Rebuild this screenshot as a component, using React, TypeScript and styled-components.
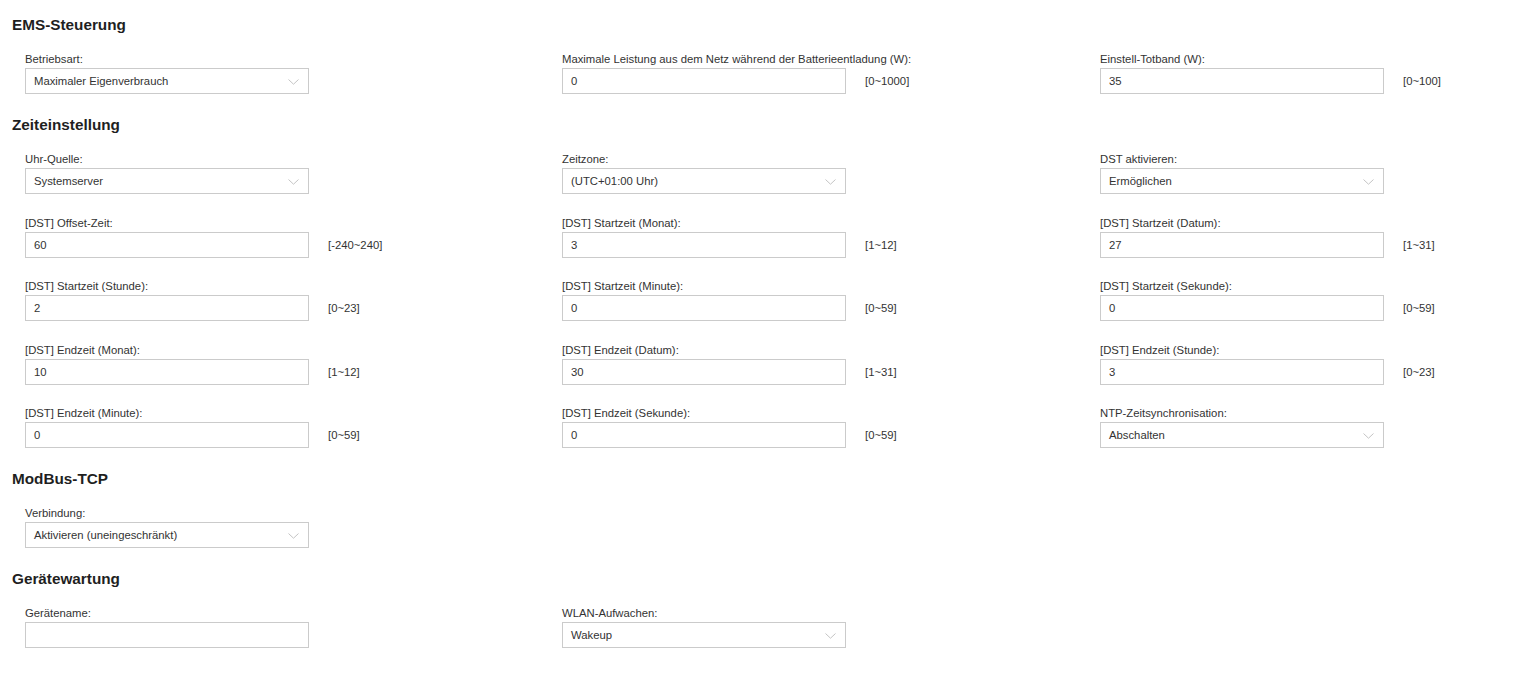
import React from "react";
import styled, { createGlobalStyle } from "styled-components";

const Global = createGlobalStyle`
  html, body { margin: 0; padding: 0; background: #fff; }
  body { font-family: Arial, "Liberation Sans", sans-serif; color: #333; }
`;

const Page = styled.div`
  padding: 0 0 20px 12px;
`;

const Section = styled.section`
  margin-top: 21px;
  &:first-child { margin-top: 15px; }
`;

const Heading = styled.h2`
  margin: 0 0 17px 0;
  font-size: 15.3px;
  line-height: 20px;
  font-weight: bold;
  color: #1f1f1f;
`;

const Grid = styled.div`
  display: grid;
  grid-template-columns: 537px 538px 1fr;
  row-gap: 21.5px;
  padding-left: 13px;
`;

const Field = styled.div`
  display: flex;
  flex-direction: column;
`;

const Label = styled.label`
  font-size: 11.3px;
  line-height: 14px;
  margin-bottom: 2px;
  color: #333;
  white-space: nowrap;
`;

const Row = styled.div`
  display: flex;
  align-items: center;
`;

const Box = styled.div`
  position: relative;
  box-sizing: border-box;
  width: 284px;
  height: 26px;
  border: 1px solid #cbcbcb;
  background: #fff;
  padding: 0 8px;
  display: flex;
  align-items: center;
  font-size: 11.3px;
  color: #333;
`;

const Chevron = styled.svg`
  position: absolute;
  right: 9px;
  top: 10px;
`;

const Range = styled.span`
  margin-left: 19px;
  font-size: 11.3px;
  color: #333;
`;

type F = { label: string; value: string; select?: boolean; range?: string };

const FieldView = ({ f }: { f: F }) => (
  <Field>
    <Label>{f.label}</Label>
    <Row>
      <Box>
        {f.value}
        {f.select && (
          <Chevron width="11" height="6" viewBox="0 0 11 6">
            <path d="M0.5 0.5 L5.5 5.2 L10.5 0.5" fill="none" stroke="#c4c4c4" strokeWidth="1" />
          </Chevron>
        )}
      </Box>
      {f.range && <Range>{f.range}</Range>}
    </Row>
  </Field>
);

const sections: { title: string; fields: F[] }[] = [
  {
    title: "EMS-Steuerung",
    fields: [
      { label: "Betriebsart:", value: "Maximaler Eigenverbrauch", select: true },
      { label: "Maximale Leistung aus dem Netz während der Batterieentladung (W):", value: "0", range: "[0~1000]" },
      { label: "Einstell-Totband (W):", value: "35", range: "[0~100]" },
    ],
  },
  {
    title: "Zeiteinstellung",
    fields: [
      { label: "Uhr-Quelle:", value: "Systemserver", select: true },
      { label: "Zeitzone:", value: "(UTC+01:00 Uhr)", select: true },
      { label: "DST aktivieren:", value: "Ermöglichen", select: true },
      { label: "[DST] Offset-Zeit:", value: "60", range: "[-240~240]" },
      { label: "[DST] Startzeit (Monat):", value: "3", range: "[1~12]" },
      { label: "[DST] Startzeit (Datum):", value: "27", range: "[1~31]" },
      { label: "[DST] Startzeit (Stunde):", value: "2", range: "[0~23]" },
      { label: "[DST] Startzeit (Minute):", value: "0", range: "[0~59]" },
      { label: "[DST] Startzeit (Sekunde):", value: "0", range: "[0~59]" },
      { label: "[DST] Endzeit (Monat):", value: "10", range: "[1~12]" },
      { label: "[DST] Endzeit (Datum):", value: "30", range: "[1~31]" },
      { label: "[DST] Endzeit (Stunde):", value: "3", range: "[0~23]" },
      { label: "[DST] Endzeit (Minute):", value: "0", range: "[0~59]" },
      { label: "[DST] Endzeit (Sekunde):", value: "0", range: "[0~59]" },
      { label: "NTP-Zeitsynchronisation:", value: "Abschalten", select: true },
    ],
  },
  {
    title: "ModBus-TCP",
    fields: [{ label: "Verbindung:", value: "Aktivieren (uneingeschränkt)", select: true }],
  },
  {
    title: "Gerätewartung",
    fields: [
      { label: "Gerätename:", value: "" },
      { label: "WLAN-Aufwachen:", value: "Wakeup", select: true },
    ],
  },
];

export default function App() {
  return (
    <>
      <Global />
      <Page>
        {sections.map((s) => (
          <Section key={s.title}>
            <Heading>{s.title}</Heading>
            <Grid>
              {s.fields.map((f) => (
                <FieldView key={f.label} f={f} />
              ))}
            </Grid>
          </Section>
        ))}
      </Page>
    </>
  );
}
